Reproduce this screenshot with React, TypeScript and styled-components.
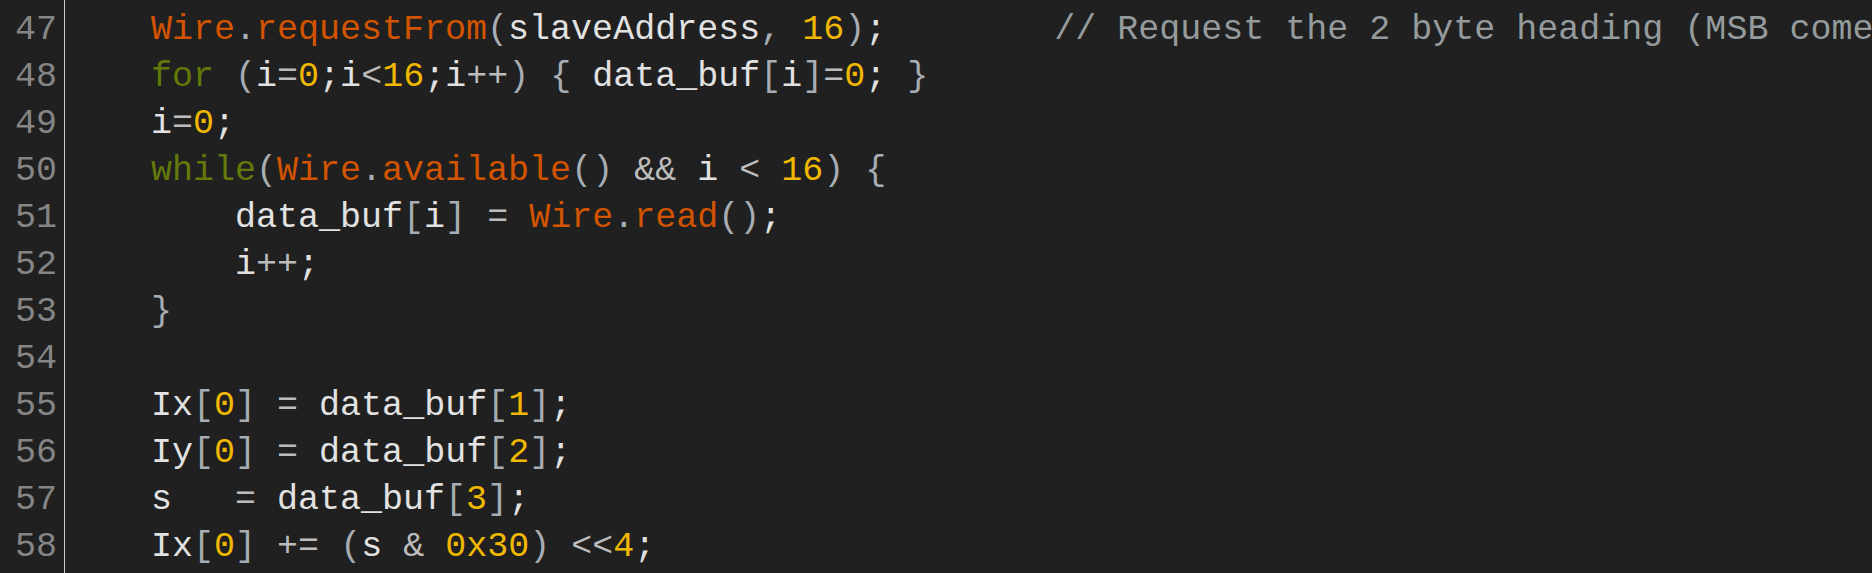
import React from "react";
import styled, { createGlobalStyle } from "styled-components";

const Global = createGlobalStyle`
  html, body {
    margin: 0;
    padding: 0;
    background: #202020;
  }
  body {
    font-family: "Liberation Mono", "Courier New", monospace;
  }
`;

const Editor = styled.div`
  display: grid;
  grid-template-columns: 65px 1fr;
  height: 573px;
  overflow: hidden;
  background: #202020;
  font-family: "Liberation Mono", "Courier New", monospace;
  font-size: 35px;
  line-height: 47px;
`;

const Gutter = styled.div`
  display: flex;
  flex-direction: column;
  align-items: flex-end;
  padding: 7px 7px 0 0;
  border-right: 1px solid #c9c9c9;
  color: #858585;
`;

const LineNo = styled.div`
  height: 47px;
  white-space: pre;
`;

const CodeArea = styled.div`
  display: flex;
  flex-direction: column;
  padding: 7px 0 0 2px;
  overflow: hidden;
`;

const Line = styled.div`
  height: 47px;
  white-space: pre;
  color: #e2e2e2;
`;

type Kind = "kw" | "fn" | "num" | "cm" | "p" | "op" | "t";

const colors: Record<Kind, string> = {
  kw: "#63790a",
  fn: "#d35400",
  num: "#f0b800",
  cm: "#959b9c",
  p: "#a7adb2",
  op: "#bcbcbc",
  t: "#e2e2e2",
};

const Tok = styled.span<{ $k: Kind }>`
  color: ${(p) => colors[p.$k]};
`;

type Seg = [Kind, string];

const lines: { n: number; segs: Seg[] }[] = [
  {
    n: 47,
    segs: [
      ["t", "    "],
      ["fn", "Wire"],
      ["p", "."],
      ["fn", "requestFrom"],
      ["p", "("],
      ["t", "slaveAddress"],
      ["p", ","],
      ["t", " "],
      ["num", "16"],
      ["p", ")"],
      ["t", ";"],
      ["t", "        "],
      ["cm", "// Request the 2 byte heading (MSB comes first)"],
    ],
  },
  {
    n: 48,
    segs: [
      ["t", "    "],
      ["kw", "for"],
      ["t", " "],
      ["p", "("],
      ["t", "i"],
      ["op", "="],
      ["num", "0"],
      ["t", ";i"],
      ["op", "<"],
      ["num", "16"],
      ["t", ";i"],
      ["op", "++"],
      ["p", ")"],
      ["t", " "],
      ["p", "{"],
      ["t", " data_buf"],
      ["p", "["],
      ["t", "i"],
      ["p", "]"],
      ["op", "="],
      ["num", "0"],
      ["t", "; "],
      ["p", "}"],
    ],
  },
  {
    n: 49,
    segs: [
      ["t", "    i"],
      ["op", "="],
      ["num", "0"],
      ["t", ";"],
    ],
  },
  {
    n: 50,
    segs: [
      ["t", "    "],
      ["kw", "while"],
      ["p", "("],
      ["fn", "Wire"],
      ["p", "."],
      ["fn", "available"],
      ["p", "()"],
      ["t", " "],
      ["op", "&&"],
      ["t", " i "],
      ["op", "<"],
      ["t", " "],
      ["num", "16"],
      ["p", ")"],
      ["t", " "],
      ["p", "{"],
    ],
  },
  {
    n: 51,
    segs: [
      ["t", "        data_buf"],
      ["p", "["],
      ["t", "i"],
      ["p", "]"],
      ["t", " "],
      ["op", "="],
      ["t", " "],
      ["fn", "Wire"],
      ["p", "."],
      ["fn", "read"],
      ["p", "()"],
      ["t", ";"],
    ],
  },
  {
    n: 52,
    segs: [
      ["t", "        i"],
      ["op", "++"],
      ["t", ";"],
    ],
  },
  { n: 53, segs: [["t", "    "], ["p", "}"]] },
  { n: 54, segs: [["t", " "]] },
  {
    n: 55,
    segs: [
      ["t", "    Ix"],
      ["p", "["],
      ["num", "0"],
      ["p", "]"],
      ["t", " "],
      ["op", "="],
      ["t", " data_buf"],
      ["p", "["],
      ["num", "1"],
      ["p", "]"],
      ["t", ";"],
    ],
  },
  {
    n: 56,
    segs: [
      ["t", "    Iy"],
      ["p", "["],
      ["num", "0"],
      ["p", "]"],
      ["t", " "],
      ["op", "="],
      ["t", " data_buf"],
      ["p", "["],
      ["num", "2"],
      ["p", "]"],
      ["t", ";"],
    ],
  },
  {
    n: 57,
    segs: [
      ["t", "    s   "],
      ["op", "="],
      ["t", " data_buf"],
      ["p", "["],
      ["num", "3"],
      ["p", "]"],
      ["t", ";"],
    ],
  },
  {
    n: 58,
    segs: [
      ["t", "    Ix"],
      ["p", "["],
      ["num", "0"],
      ["p", "]"],
      ["t", " "],
      ["op", "+="],
      ["t", " "],
      ["p", "("],
      ["t", "s "],
      ["op", "&"],
      ["t", " "],
      ["num", "0x30"],
      ["p", ")"],
      ["t", " "],
      ["op", "<<"],
      ["num", "4"],
      ["t", ";"],
    ],
  },
];

export default function App() {
  return (
    <>
      <Global />
      <Editor>
        <Gutter>
          {lines.map((l) => (
            <LineNo key={l.n}>{l.n}</LineNo>
          ))}
        </Gutter>
        <CodeArea>
          {lines.map((l) => (
            <Line key={l.n}>
              {l.segs.map(([k, s], i) => (
                <Tok key={i} $k={k}>
                  {s}
                </Tok>
              ))}
            </Line>
          ))}
        </CodeArea>
      </Editor>
    </>
  );
}
